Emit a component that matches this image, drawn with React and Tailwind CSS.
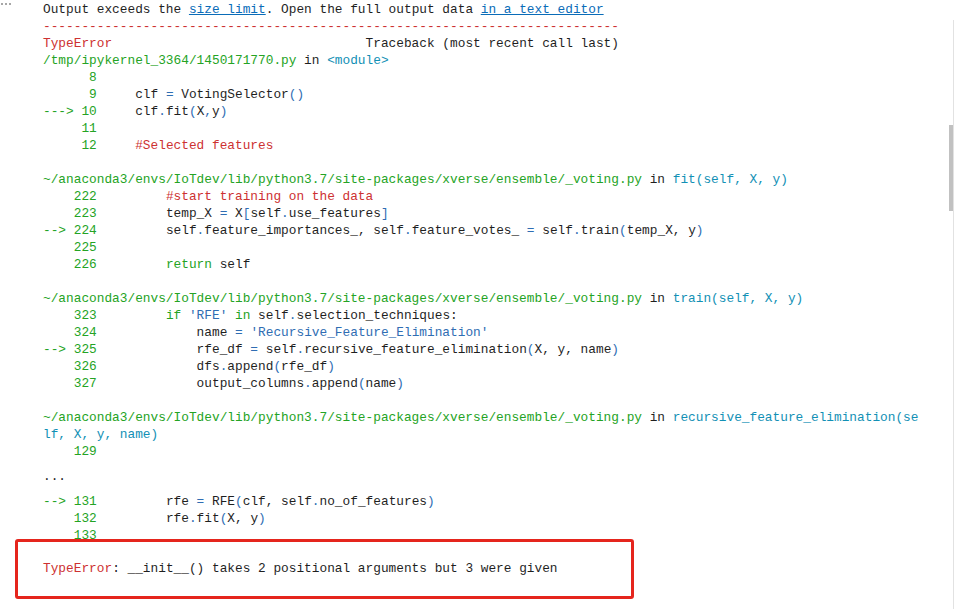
import React from "react";

const G = "text-[#24a324]";
const R = "text-[#cd3131]";
const B = "text-[#2f6db3]";
const C = "text-[#1290b5]";

function Line({ children, className = "" }) {
  return <div className={"h-[17px] leading-[17px] whitespace-pre " + className}>{children}</div>;
}

function Blank() {
  return <div className="h-[17px]" />;
}

function Op({ children }) {
  return <span className={B}>{children}</span>;
}

const FILE = "~/anaconda3/envs/IoTdev/lib/python3.7/site-packages/xverse/ensemble/_voting.py";

export default function App() {
  return (
    <div className="relative h-[609px] w-[964px] overflow-hidden bg-white text-[#1f1f1f] font-['Liberation_Mono','DejaVu_Sans_Mono',monospace] text-[12.8px]">
      {/* cell gutter "more" dots */}
      <div className="absolute left-[1px] top-[3px] flex gap-[2px]">
        <span className="h-[2px] w-[2px] rounded-full bg-[#8a8a8a]" />
        <span className="h-[2px] w-[2px] rounded-full bg-[#8a8a8a]" />
        <span className="h-[2px] w-[2px] rounded-full bg-[#8a8a8a]" />
      </div>

      {/* scrollbar */}
      <div className="absolute left-[953px] top-[20px] bottom-0 w-px bg-[#e2e2e2]" />
      <div className="absolute left-[949px] top-[125px] h-[86px] w-[4px] bg-[#c1c1c1]" />

      <div className="pl-[43px] pt-px">
        <Line>
          Output exceeds the <span className="text-[#0a6cb8] underline">size limit</span>. Open the full output data{" "}
          <span className="text-[#0a6cb8] underline">in a text editor</span>
        </Line>
        <Line className={R}>{"-".repeat(75)}</Line>
        <Line>
          <span className={R}>TypeError</span>
          {"                                 Traceback (most recent call last)"}
        </Line>
        <Line>
          <span className={G}>/tmp/ipykernel_3364/1450171770.py</span> in <span className={C}>{"<module>"}</span>
        </Line>
        <Line className={G}>{"      8"}</Line>
        <Line>
          <span className={G}>{"      9"}</span>
          {"     clf "}<Op>=</Op>{" VotingSelector"}<Op>()</Op>
        </Line>
        <Line>
          <span className={G}>{"---> 10"}</span>
          {"     clf"}<Op>.</Op>fit<Op>(</Op>X<Op>,</Op>y<Op>)</Op>
        </Line>
        <Line className={G}>{"     11"}</Line>
        <Line>
          <span className={G}>{"     12"}</span>
          <span className={R}>{"     #Selected features"}</span>
        </Line>
        <Blank />

        <Line>
          <span className={G}>{FILE}</span> in <span className={C}>fit(self, X, y)</span>
        </Line>
        <Line>
          <span className={G}>{"    222"}</span>
          <span className={R}>{"         #start training on the data"}</span>
        </Line>
        <Line>
          <span className={G}>{"    223"}</span>
          {"         temp_X "}<Op>=</Op>{" X"}<Op>[</Op>self<Op>.</Op>use_features<Op>]</Op>
        </Line>
        <Line>
          <span className={G}>{"--> 224"}</span>
          {"         self"}<Op>.</Op>{"feature_importances_, self"}<Op>.</Op>{"feature_votes_ "}<Op>=</Op>{" self"}<Op>.</Op>train<Op>(</Op>{"temp_X, y"}<Op>)</Op>
        </Line>
        <Line className={G}>{"    225"}</Line>
        <Line>
          <span className={G}>{"    226"}</span>
          {"         "}<span className={G}>return</span>{" self"}
        </Line>
        <Blank />

        <Line>
          <span className={G}>{FILE}</span> in <span className={C}>train(self, X, y)</span>
        </Line>
        <Line>
          <span className={G}>{"    323"}</span>
          {"         "}<span className={G}>if</span> <Op>'RFE'</Op> <span className={G}>in</span>{" self"}<Op>.</Op>selection_techniques:
        </Line>
        <Line>
          <span className={G}>{"    324"}</span>
          {"             name "}<Op>=</Op> <Op>'Recursive_Feature_Elimination'</Op>
        </Line>
        <Line>
          <span className={G}>{"--> 325"}</span>
          {"             rfe_df "}<Op>=</Op>{" self"}<Op>.</Op>recursive_feature_elimination<Op>(</Op>{"X, y, name"}<Op>)</Op>
        </Line>
        <Line>
          <span className={G}>{"    326"}</span>
          {"             dfs"}<Op>.</Op>append<Op>(</Op>rfe_df<Op>)</Op>
        </Line>
        <Line>
          <span className={G}>{"    327"}</span>
          {"             output_columns"}<Op>.</Op>append<Op>(</Op>name<Op>)</Op>
        </Line>
        <Blank />

        <Line>
          <span className={G}>{FILE}</span> in <span className={C}>recursive_feature_elimination(se</span>
        </Line>
        <Line className={C}>lf, X, y, name)</Line>
        <Line className={G}>{"    129"}</Line>
        <div className="my-[8px]">
          <Line>...</Line>
        </div>
        <Line>
          <span className={G}>{"--> 131"}</span>
          {"         rfe "}<Op>=</Op>{" RFE"}<Op>(</Op>{"clf, self"}<Op>.</Op>no_of_features<Op>)</Op>
        </Line>
        <Line>
          <span className={G}>{"    132"}</span>
          {"         rfe"}<Op>.</Op>fit<Op>(</Op>{"X, y"}<Op>)</Op>
        </Line>
        <Line className={G}>{"    133"}</Line>
      </div>

      {/* annotation box over the output */}
      <div className="absolute left-[15px] top-[539px] h-[60px] w-[619px] rounded-[3px] border-[3px] border-[#e5251d] bg-white">
        <div className="pl-[25px] pt-[18px] leading-[17px] whitespace-pre">
          <span className={R}>TypeError</span>: __init__() takes 2 positional arguments but 3 were given
        </div>
      </div>
    </div>
  );
}
